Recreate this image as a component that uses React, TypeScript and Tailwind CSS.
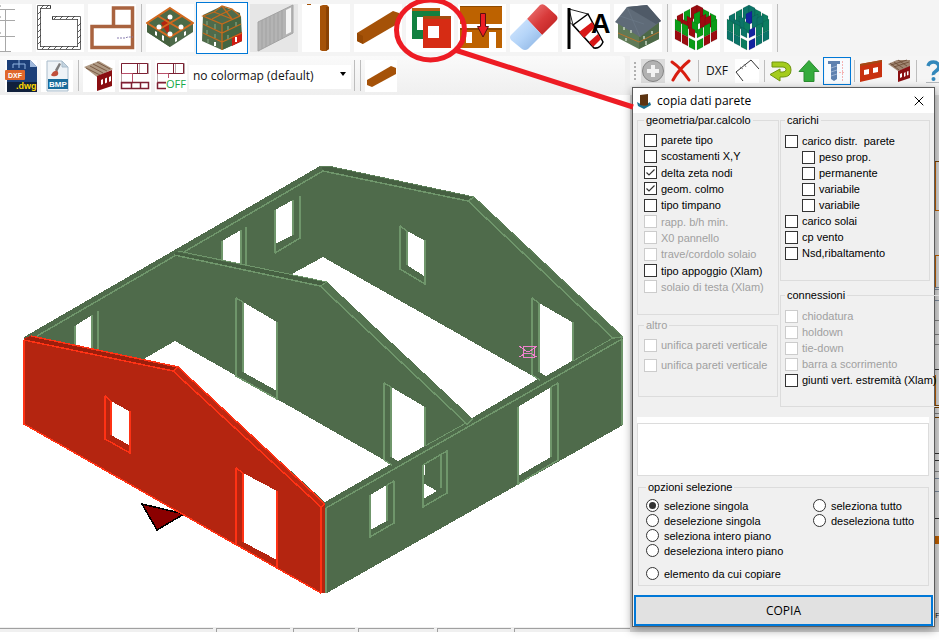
import { useState, type ReactNode } from 'react'
import clsx from 'clsx'
import { X } from 'lucide-react'

type Option = {
  id: string
  label: string
  disabled?: boolean
  indent?: boolean
}

const GEOMETRIA: Option[] = [
  { id: 'parete-tipo', label: 'parete tipo' },
  { id: 'scostamenti', label: 'scostamenti X,Y' },
  { id: 'delta-zeta', label: 'delta zeta nodi' },
  { id: 'geom-colmo', label: 'geom. colmo' },
  { id: 'tipo-timpano', label: 'tipo timpano' },
  { id: 'rapp-bh', label: 'rapp. b/h min.', disabled: true },
  { id: 'x0', label: 'X0 pannello', disabled: true },
  { id: 'trave', label: 'trave/cordolo solaio', disabled: true },
  { id: 'appoggio', label: 'tipo appoggio (Xlam)' },
  { id: 'solaio-testa', label: 'solaio di testa (Xlam)', disabled: true },
]

const ALTRO: Option[] = [
  { id: 'unifica-1', label: 'unifica pareti verticale', disabled: true },
  { id: 'unifica-2', label: 'unifica pareti verticale', disabled: true },
]

const CARICHI: Option[] = [
  { id: 'distr', label: 'carico distr.  parete' },
  { id: 'peso', label: 'peso prop.', indent: true },
  { id: 'permanente', label: 'permanente', indent: true },
  { id: 'variabile-1', label: 'variabile', indent: true },
  { id: 'variabile-2', label: 'variabile', indent: true },
  { id: 'solai', label: 'carico solai' },
  { id: 'vento', label: 'cp vento' },
  { id: 'nsd', label: 'Nsd,ribaltamento' },
]

const CONNESSIONI: Option[] = [
  { id: 'chiodatura', label: 'chiodatura', disabled: true },
  { id: 'holdown', label: 'holdown', disabled: true },
  { id: 'tie-down', label: 'tie-down', disabled: true },
  { id: 'barra', label: 'barra a scorrimento', disabled: true },
  { id: 'giunti', label: 'giunti vert. estremità (Xlam)' },
]

const SELEZIONE = ['selezione singola', 'deselezione singola', 'seleziona intero piano', 'deseleziona intero piano']
const SELEZIONE_TUTTO = ['seleziona tutto', 'deseleziona tutto']

/* ---------- large toolbar icons, 48x48 ---------- */

function Icon48({ children }: { children: ReactNode }) {
  return (
    <svg viewBox="0 0 48 48" className="h-12 w-12 shrink-0" aria-hidden>
      {children}
    </svg>
  )
}

function GridIcon() {
  return (
    <Icon48>
      <path d="M15 5.5H31M15 16.5H31M15 32.5H31M21.5 5V47M16 47.5H27" stroke="#a8a8a8" fill="none" />
      <path d="M15 2H17M15 13H17M15 29H17" stroke="#888" fill="none" />
    </Icon48>
  )
}

function WallPlanIcon() {
  return (
    <Icon48>
      <path d="M15 3H3V44H43V14H16" fill="none" stroke="#333" strokeWidth="3.500" />
      <path d="M14 3H3V44H43V14H17" fill="none" stroke="#fff" strokeWidth="2" />
      <path
        d="M5 4l3-3M10 4l3-3M2 10l3-3M2 16l3-3M2 22l3-3M2 28l3-3M2 34l3-3M2 40l3-3M6 45l3-3M12 45l3-3M18 45l3-3M24 45l3-3M30 45l3-3M36 45l3-3M42 40l3-3M42 34l3-3M42 28l3-3M42 22l3-3M36 15l3-3M30 15l3-3M24 15l3-3M18 15l3-3"
        stroke="#333"
        strokeWidth=".8"
      />
    </Icon48>
  )
}

function FloorPlanIcon() {
  return (
    <Icon48>
      <path d="M4 22.500H44.500V43.500H4ZM25.500 22V4H44.500V22" fill="none" stroke="#a9633f" strokeWidth="3.500" />
      <path d="M29 34h8l3-1h5" fill="none" stroke="#8a7fb0" strokeDasharray="2 1" />
    </Icon48>
  )
}

function OpenFloorIcon() {
  return (
    <Icon48>
      <path d="M24 4L47 19V28L24 43L1 28V19Z" fill="#4f6b4b" />
      <path d="M24 33V43L1 28V19Z" fill="#45613f" />
      <path d="M24 4L47 19L24 33L1 19Z" fill="#4c6a47" />
      <path d="M15 19L23 14V27L21 29Z" fill="#b42510" />
      <path d="M24 4L47 19L24 33L1 19ZM12 12L36 26M36 12L12 26" fill="none" stroke="#d2691e" strokeWidth="2" />
      <circle cx="24" cy="13" r="2.500" fill="#fff" />
      <circle cx="13" cy="23" r="2.500" fill="#fff" />
      <circle cx="35" cy="23" r="2.500" fill="#fff" />
      <circle cx="24" cy="30" r="2.500" fill="#fff" />
      <path d="M9 27l2 1v4l-2-1zM16 31l2 1v5l-2-1zM29 34l2-1v4l-2 1zM38 28l2-1v4l-2 1z" fill="#fff" />
    </Icon48>
  )
}

function BuildingIcon() {
  return (
    <Icon48>
      <path d="M5 11L24 2L42 9L44 37L24 46L4 37Z" fill="#4f6b4b" />
      <path d="M24 20L43 12L44 37L24 46Z" fill="#456541" />
      <path d="M34 33L44 28V37L34 42Z" fill="#d01c12" />
      <path
        d="M5 12L16 8L24 2L34 5L42 12L24 20ZM16 8L34 15M24 2L34 15M14 15L34 5M5 20L24 29L43 20M5 29L24 38L44 29M24 20V46"
        fill="none"
        stroke="#c46a1c"
        strokeWidth="1.300"
      />
      <path d="M9 17v4M17 20v5M9 26v4M17 30v4M30 22v4M38 18v4M30 31v4M10 35v4" stroke="#6c8b68" strokeWidth="2" />
      <path d="M17 38v4M38 33v5" stroke="#fff" strokeWidth="2" />
    </Icon48>
  )
}

function PanelIcon() {
  return (
    <Icon48>
      <rect width="48" height="48" fill="#e6e6e6" />
      <path d="M8 18L43 1V29L8 47Z" fill="#b4b4b4" stroke="#a4a4a4" />
      <path d="M12 16V45M16 14V43M20 12V41M24 10V39M28 8V37M32 6V35" stroke="#a2a2a2" />
      <path d="M36 6L41 3.500V28L36 30.500Z" fill="#f4f4f4" />
    </Icon48>
  )
}

function PostIcon() {
  return (
    <Icon48>
      <path d="M18 2l3-1h4l2 2v42l-3 2h-4l-2-1z" fill="#a55208" />
      <path d="M24 3h3v42l-3 2z" fill="#8a4204" />
      <path d="M5 0h4v1H5z" fill="#a55208" />
    </Icon48>
  )
}

function BeamIcon() {
  return (
    <Icon48>
      <path d="M3 29L39 7L45 9V19L9 40L3 37Z" fill="#a55208" />
      <path d="M3 29L9 32V40L3 37Z" fill="#964803" />
    </Icon48>
  )
}

function CopyWallIcon() {
  return (
    <Icon48>
      <path d="M6 5H34V35H6ZM11 13V26H17V13Z" fill="#138040" fillRule="evenodd" />
      <path d="M6 4h28v3H6z" fill="#b75c12" />
      <path d="M17 12H45V44H17ZM22 22V34H33V22Z" fill="#d62c14" fillRule="evenodd" />
      <path d="M22 22h11v12H22z" fill="#fff" />
      <path d="M17 12h28v3H17z" fill="#a54c10" />
    </Icon48>
  )
}

function SplitWallIcon() {
  return (
    <Icon48>
      <path d="M2 2H44V20H2ZM2 25H44V44H2ZM8 28V39H14V28ZM31 28V44H38V28Z" fill="#bd6200" fillRule="evenodd" />
      <path d="M2 24h42v2H2zM2 2h42v1H2z" fill="#8f4a00" />
      <path d="M22.500 9.500h5v13h3L25 33l-5.500-10.500h3z" fill="#ed1c24" stroke="#5c1010" />
    </Icon48>
  )
}

function EraserIcon() {
  return (
    <Icon48>
      <defs>
        <linearGradient id="rubberRed" x1="0" y1="0" x2="1" y2="1">
          <stop offset="0" stopColor="#f08080" />
          <stop offset=".5" stopColor="#d83a3a" />
          <stop offset="1" stopColor="#b81c1c" />
        </linearGradient>
        <linearGradient id="rubberBlue" x1="0" y1="0" x2="1" y2="1">
          <stop offset="0" stopColor="#d8eaff" />
          <stop offset=".5" stopColor="#b4d4f8" />
          <stop offset="1" stopColor="#88b0e0" />
        </linearGradient>
      </defs>
      <path d="M17 15L30 1Q33 -1 36 2L46 11Q49 14 46 17L32 31Z" fill="url(#rubberRed)" />
      <path d="M17 15L32 31L18 45Q15 47 12 45L1 36Q-1 33 1 31Z" fill="url(#rubberBlue)" />
    </Icon48>
  )
}

function WindsockIcon() {
  return (
    <Icon48>
      <path d="M11 21L26 10L41 38Q38 45 32 44Z" fill="#fff" stroke="#000" strokeWidth="1.500" />
      <path d="M17 28L30 18L33 23L22 34ZM27 38L36 30L39 35L31 43Z" fill="#d81818" />
      <path d="M7 5L26 10M7 5L11 21M7 18L11 21" stroke="#222" fill="none" />
      <path d="M7 4V45" stroke="#000" strokeWidth="3" />
      <text x="29" y="29" fontSize="27" fontWeight="700" fontFamily="Liberation Sans, sans-serif">
        A
      </text>
    </Icon48>
  )
}

function HouseIcon() {
  return (
    <Icon48>
      <path d="M4 19L26 28L45 18V35L25 45L4 34Z" fill="#5f7a57" />
      <path d="M25 30L45 18V35L25 45Z" fill="#4d6947" />
      <path d="M1 18L13 3L33 1L47 17L26 33Z" fill="#5f6b78" />
      <path d="M13 3L33 1L47 17L42 20Z" fill="#4f5a67" />
      <path d="M13 3L26 33M6 12L30 20" stroke="#6c7886" strokeWidth=".7" fill="none" />
      <path d="M4 29L25 38L45 28" stroke="#b8722c" fill="none" />
      <path d="M10 23v3M17 26v3M30 32v3M38 27v3M12 34v3M32 37v4" stroke="#c4d4c0" strokeWidth="1.500" />
    </Icon48>
  )
}

type Block = [x: number, y: number, slope: 3 | -3, h: number, tone: 0 | 1 | 2]

// back to front, so the front walls cover the inner ones
const BLOCKS: Block[] = [
  [19, 4, -3, 12, 0],
  [25, 1, 3, 12, 0],
  [12, 8, -3, 12, 1],
  [31, 5, 3, 12, 1],
  [5, 12, -3, 10, 0],
  [38, 9, 3, 12, 1],
  [15, 12, 3, 12, 0],
  [22, 10, -3, 12, 2],
  [28, 13, -3, 12, 0],
  [20, 17, 3, 10, 1],
  [10, 15, 3, 8, 0],
  [33, 14, -3, 12, 0],
  [3, 15, 3, 11, 1],
  [10, 19, 3, 11, 1],
  [17, 23, 3, 8, 0],
  [25, 26, -3, 8, 2],
  [32, 22, -3, 11, 1],
  [39, 18, -3, 11, 1],
  [3, 26, 3, 9, 0],
  [10, 30, 3, 9, 0],
  [17, 34, 3, 9, 1],
  [25, 37, -3, 9, 2],
  [32, 33, -3, 9, 0],
  [39, 29, -3, 9, 0],
]

function BlocksIcon({ tones }: { tones: [string, string, string] }) {
  return (
    <Icon48>
      {BLOCKS.map(([x, y, slope, h, tone], i) => (
        <path
          key={i}
          d={`M${x} ${y}l6 ${slope}v${h}l-6 ${-slope}z`}
          fill={tones[tone]}
          stroke="rgba(0,0,0,.2)"
          strokeWidth=".5"
        />
      ))}
    </Icon48>
  )
}

/* ---------- small toolbar icons, 32x32 and 24x24 ---------- */

function Icon32({ children }: { children: ReactNode }) {
  return (
    <svg viewBox="0 0 32 32" className="h-8 w-8 shrink-0 bg-white" aria-hidden>
      {children}
    </svg>
  )
}

function DxfIcon() {
  return (
    <Icon32>
      <path d="M2 0H25L32 7V32H2Z" fill="#1c3f78" />
      <path d="M2 22H32V32H2Z" fill="#10203c" />
      <path d="M25 0L32 7H25Z" fill="#9fb8dc" />
      <path d="M8 8V4h12v5M14 0v8" stroke="#8fb4e0" fill="none" />
      <rect x="0" y="10" width="20" height="10" rx="1" fill="#e0672c" />
      <text x="3" y="18" fontSize="7" fontWeight="700" fill="#fff" fontFamily="Liberation Sans, sans-serif">
        DXF
      </text>
      <text x="11" y="29" fontSize="9" fontWeight="700" fill="#ffd800" fontFamily="Liberation Sans, sans-serif">
        .dwg
      </text>
    </Icon32>
  )
}

function BmpIcon() {
  return (
    <Icon32>
      <path d="M6 1H21L27 7V31H6Z" fill="#eef3f7" stroke="#a9bccb" />
      <path d="M21 1V7H27Z" fill="#c4d4e0" stroke="#a9bccb" />
      <path d="M18 3l-4 7 2 2 4-8z" fill="#7d7d7d" />
      <path d="M12 12q4-3 5 0t-2 4q-4 1-5-1z" fill="#c0503c" />
      <rect x="7" y="19" width="20" height="10" fill="#1a6c9c" />
      <text x="8" y="27" fontSize="8" fontWeight="700" fill="#fff" fontFamily="Liberation Sans, sans-serif">
        BMP
      </text>
    </Icon32>
  )
}

function RoofWallIcon() {
  return (
    <Icon32>
      <path d="M1 7L16 1L30 9L14 17Z" fill="#b09a84" />
      <path d="M3 8L17 15M7 6L20 13M10 4L24 11M14 2L27 9" stroke="#7a5a44" />
      <path d="M14 16L29 10V26L14 31Z" fill="#8a0f12" />
      <path d="M18 20l2-1v5l-2 1zM22 18.500l2-1v5l-2 1zM26 17l2-1v5l-2 1z" fill="#fff" />
    </Icon32>
  )
}

function LayoutIcon({ off }: { off?: boolean }) {
  return (
    <Icon32>
      <path d="M2.500 3.500H29.500V14M20.500 3V14M2.500 3.500V29" fill="none" stroke="#b7a5a7" />
      <path d="M2.500 3.500H28.500V13.500H2.500ZM18.500 3.500V13.500" fill="none" stroke="#7d2033" />
      <path d="M2.500 13.500H13.500V23H2.500" fill="none" stroke="#b8506a" />
      {off ? (
        <>
          <path d="M2.500 22.500H11M2.500 22.500V28.500H11" fill="none" stroke="#7d2033" strokeWidth="1.500" />
          <path d="M11 18h21v11H11z" fill="#fff" />
          <text x="11" y="28" fontSize="11" fill="#14a848" fontFamily="Open Sans, sans-serif">
            OFF
          </text>
        </>
      ) : (
        <path d="M2.500 22.500H29.500V28.500H2.500ZM12.500 22V28M21.500 22V28" fill="none" stroke="#7d2033" strokeWidth="1.500" />
      )}
    </Icon32>
  )
}

function SmallBeamIcon() {
  return (
    <Icon32>
      <path d="M2 20L26 6L31 8V14L7 27L2 25Z" fill="#a55208" />
    </Icon32>
  )
}

function Icon24({ children }: { children: ReactNode }) {
  return (
    <svg viewBox="0 0 24 24" className="h-6 w-6 shrink-0" aria-hidden>
      {children}
    </svg>
  )
}

function AddIcon() {
  return (
    <Icon24>
      <rect width="24" height="24" fill="#dcdcdc" />
      <circle cx="12" cy="12" r="10.500" fill="#b2b2b2" stroke="#858585" />
      <path d="M10 6h4v4h4v4h-4v4h-4v-4H6v-4h4z" fill="#f2f2f2" />
    </Icon24>
  )
}

function DeleteIcon() {
  return (
    <Icon24>
      <path d="M3 3Q12 9 20 21M20 2Q10 10 4 21" fill="none" stroke="#d81e10" strokeWidth="3" strokeLinecap="round" />
    </Icon24>
  )
}

function PolylineIcon() {
  return (
    <Icon24>
      <rect width="24" height="24" fill="#fff" />
      <path d="M8 22L1 13L16 1L24 10" fill="none" stroke="#333" />
      <path d="M5 8l3 2M9 5l2 3" stroke="#888" />
    </Icon24>
  )
}

function UndoIcon() {
  return (
    <Icon24>
      <path
        d="M3 3H14Q22 4 22 11T14 18H11V22L1 15.500L11 10V13H14Q17 13 17 10.500T14 8H3Z"
        fill="#a4cc1c"
        stroke="#6f9410"
      />
    </Icon24>
  )
}

function UpIcon() {
  return (
    <Icon24>
      <path d="M12 1.500L22 12.500H17V22.500H7V12.500H2Z" fill="#35ab3c" stroke="#2b8c31" />
    </Icon24>
  )
}

function ScrewIcon() {
  return (
    <Icon24>
      <rect width="24" height="24" fill="#f7fbff" />
      <path d="M3 2h12v3h-3v15l-3 2-3-2V5H3z" fill="#5f82b0" />
      <path d="M6 9l6-2M6 13l6-2M6 17l6-2" stroke="#a9bdd8" strokeWidth=".8" />
      <path d="M17.500 2V22M14 13.500h6" stroke="#f4b4b4" strokeDasharray="2 1" />
    </Icon24>
  )
}

function WallIcon() {
  return (
    <Icon24>
      <path d="M1 5L23 1V18L1 23Z" fill="#c8310f" />
      <path d="M1 5L23 1V3L1 7Z" fill="#a14a14" />
      <path d="M5 11l5-1v5l-5 1zM14 9l5-1v5l-5 1z" fill="#fff" />
    </Icon24>
  )
}

function RoofIcon() {
  return (
    <Icon24>
      <path d="M1 5L10 1H23V8L11 12Z" fill="#a08672" />
      <path d="M4 6l16-5M7 8l15-5M3 4l9 7M7 3l9 6M11 1l9 6" stroke="#6b4a34" strokeWidth=".8" />
      <path d="M11 12L23 7V19L11 23Z" fill="#8a0f12" />
      <path d="M13 15l2-1v4l-2 1zM17 14l1.500-1v4L17 18zM20 12.500l1.500-.5v4l-1.500.5z" fill="#fff" />
    </Icon24>
  )
}

function HelpIcon() {
  return (
    <Icon24>
      <path d="M7 7Q8 3 12.500 3T18 7.500Q18 10 15 12T12.500 16" fill="none" stroke="#3388bb" strokeWidth="3.500" />
      <circle cx="12.500" cy="20" r="2" fill="#3388bb" />
      <path d="M5 23.500H20" stroke="#b4b8bc" />
    </Icon24>
  )
}

/* ---------- toolbars ---------- */

function Separator() {
  return (
    <span className="flex w-[6px] shrink-0 justify-center self-stretch py-1" aria-hidden>
      <span className="w-px bg-[#bdbdbd]" />
    </span>
  )
}

function BigButton({ title, active, plain, children }: { title: string; active?: boolean; plain?: boolean; children: ReactNode }) {
  return (
    <button
      type="button"
      aria-label={title}
      className={clsx(
        'flex h-[52px] w-[52px] shrink-0 items-center justify-center border',
        active ? 'border-[#0078d7] bg-white' : 'border-transparent',
      )}
    >
      <span className={clsx('block', !plain && 'bg-white')}>{children}</span>
    </button>
  )
}

function MediumButton({ title, children }: { title: string; children: ReactNode }) {
  return (
    <button type="button" aria-label={title} className="flex h-9 w-9 shrink-0 items-center justify-center">
      {children}
    </button>
  )
}

function SmallButton({ title, active, children }: { title: string; active?: boolean; children: ReactNode }) {
  return (
    <button
      type="button"
      aria-label={title}
      className={clsx(
        'flex h-7 w-7 shrink-0 items-center justify-center border',
        active ? 'border-[#0078d7]' : 'border-transparent',
      )}
    >
      {children}
    </button>
  )
}

function MainToolbar() {
  return (
    <div className="flex h-14 items-center overflow-hidden bg-[#f4f4f4]">
      <button type="button" aria-label="griglia" className="flex h-[52px] w-[34px] shrink-0 items-center justify-end overflow-hidden pr-[2px]">
        <span className="bg-white">
          <GridIcon />
        </span>
      </button>
      <BigButton title="muri"><WallPlanIcon /></BigButton>
      <BigButton title="pianta"><FloorPlanIcon /></BigButton>
      <Separator />
      <BigButton title="piano 3D"><OpenFloorIcon /></BigButton>
      <BigButton title="edificio 3D" active><BuildingIcon /></BigButton>
      <BigButton title="pannello" plain><PanelIcon /></BigButton>
      <BigButton title="pilastro"><PostIcon /></BigButton>
      <BigButton title="trave"><BeamIcon /></BigButton>
      <BigButton title="copia dati parete"><CopyWallIcon /></BigButton>
      <BigButton title="dividi parete"><SplitWallIcon /></BigButton>
      <BigButton title="cancella"><EraserIcon /></BigButton>
      <BigButton title="vento"><WindsockIcon /></BigButton>
      <BigButton title="casa"><HouseIcon /></BigButton>
      <Separator />
      <BigButton title="verifiche"><BlocksIcon tones={['#9c0c10', '#0c9c18', '#0c9c18']} /></BigButton>
      <BigButton title="colormap"><BlocksIcon tones={['#0c7468', '#0c7c60', '#1424a0']} /></BigButton>
      <Separator />
    </div>
  )
}

function ViewToolbar() {
  return (
    <div className="flex min-w-0 flex-1 items-center overflow-hidden rounded-r-sm bg-gradient-to-b from-[#fafafa] to-[#efefef] pl-[3px]">
      <MediumButton title="esporta DXF"><DxfIcon /></MediumButton>
      <MediumButton title="esporta BMP"><BmpIcon /></MediumButton>
      <Separator />
      <MediumButton title="tetto"><RoofWallIcon /></MediumButton>
      <MediumButton title="layout"><LayoutIcon /></MediumButton>
      <MediumButton title="layout off"><LayoutIcon off /></MediumButton>
      <div className="relative w-[162px] shrink-0">
        <select
          aria-label="colormap"
          className="h-6 w-full appearance-none bg-white pb-[2px] pl-1 font-['Open_Sans',sans-serif] text-[12px] text-[#111]"
        >
          <option>no colormap (default)</option>
        </select>
        <svg viewBox="0 0 6 4" className="pointer-events-none absolute top-[10px] right-[5px] h-1 w-[6px]" aria-hidden>
          <path d="M0 0H6L3 4Z" fill="#000" />
        </svg>
      </div>
      <Separator />
      <Separator />
      <MediumButton title="trave"><SmallBeamIcon /></MediumButton>
    </div>
  )
}

function EditToolbar() {
  return (
    <div className="flex h-[30px] w-[309px] shrink-0 items-center overflow-hidden bg-[#f5f5f5]">
      <span className="flex w-[9px] shrink-0 flex-col items-center gap-[2px]" aria-hidden>
        {[0, 1, 2, 3, 4].map((dot) => (
          <span key={dot} className="h-[2px] w-[2px] bg-[#b0b0b0]" />
        ))}
      </span>
      <SmallButton title="aggiungi"><AddIcon /></SmallButton>
      <SmallButton title="elimina"><DeleteIcon /></SmallButton>
      <Separator />
      <button type="button" className="w-8 shrink-0 text-center font-['Open_Sans',sans-serif] text-[12px] text-[#111]">
        DXF
      </button>
      <SmallButton title="polilinea"><PolylineIcon /></SmallButton>
      <Separator />
      <SmallButton title="annulla"><UndoIcon /></SmallButton>
      <SmallButton title="su"><UpIcon /></SmallButton>
      <SmallButton title="connettori" active><ScrewIcon /></SmallButton>
      <Separator />
      <SmallButton title="parete"><WallIcon /></SmallButton>
      <SmallButton title="copertura"><RoofIcon /></SmallButton>
      <Separator />
      <SmallButton title="guida"><HelpIcon /></SmallButton>
    </div>
  )
}

/* ---------- 3D model ---------- */

function Model() {
  return (
    <svg
      viewBox="0 95 625 532"
      className="h-[532px] w-[625px] shrink-0"
      shapeRendering="crispEdges"
      role="img"
      aria-label="modello 3D"
    >
      {/* back walls */}
      <path d="M24 337L320 166H328L474 197L623 337V425L327 593H322L24 424Z" fill="#4f6b4b" />
      <path d="M322 166L328 166L474 197L468 201L323 171Z" fill="#466042" />
      <path d="M474 197L623 337L613 338L468 201Z" fill="#547350" />
      <path d="M320 166H328L474 197L623 337" fill="none" stroke="#5d7f59" />
      <path d="M37 336L178 254M184 252L323 171L468 201L613 338L623 337M474 197L468 201" fill="none" stroke="#6f966b" strokeWidth="1.500" />

      {/* floor seen between the walls */}
      <path d="M323 257L538 379L472 418L326 282L290 275Z" fill="#fff" />
      <path d="M175 341L391 464L325 502L178 368L142 360Z" fill="#fff" />

      {/* openings of the left and back walls */}
      <path
        d="M275 210L293 200V235L275 244ZM222 241L241 230V264L222 260ZM75 326L92 315V349L75 345ZM407 231L424 240V276L407 265ZM539 303L572 322V361L546 376L539 372Z"
        fill="#fff"
      />
      <path
        d="M300 196V238L275 253M275 210V253M293 200V235M246 227V265M241 230V264M222 241V260M98 311V350M92 315V349M75 326V345M400 226V269L425 284V240M407 231V265M400 226L407 231M532 298V375M539 303V372M573 322V361M532 298L539 303M532 375L540 380"
        fill="none"
        stroke="#6f966b"
        strokeWidth="1.500"
      />

      {/* middle wall */}
      <path d="M175 252L327 282L320 286L175 256Z" fill="#466042" />
      <path d="M327 282L473 419L467 424L320 286Z" fill="#547350" />
      <path d="M178 251L327 282L320 286" fill="none" stroke="#6f966b" />
      <path d="M174 255L320 286L467 424L473 419" fill="none" stroke="#6f966b" strokeWidth="1.500" />
      <path d="M243 302L277 322V391L243 372ZM391 387L425 407V446L398 461L391 457Z" fill="#fff" />
      <path
        d="M236 298V376L277 399V322M243 302V372M236 298L243 302M384 383V460M391 387V457M384 383L391 387M425 407V446M384 460L392 465"
        fill="none"
        stroke="#6f966b"
        strokeWidth="1.500"
      />

      {/* right wall */}
      <path d="M326 508L622 339M326 508V593M622 339V425" fill="none" stroke="#6f966b" strokeWidth="1.500" />
      <path d="M613 338L573 361M466 423L425 446" fill="none" stroke="#6f966b" />
      <path d="M518 407L551 387V457L518 476ZM370 495L387 485V521L370 530ZM423 483L437 491L423 499ZM423 465L425 464V475H423Z" fill="#fff" />
      <path
        d="M551 387V457M558 383V460L518 484V407M551 387L558 383M387 485V521M394 481V523L370 537V495M387 485L394 481M423 465L447 451V493L423 507V465M441 454V488"
        fill="none"
        stroke="#6f966b"
        strokeWidth="1.500"
      />

      <path d="M142 504L184 514L157 530Z" fill="#8b0000" stroke="#000" strokeWidth="1.500" />

      {/* selected wall */}
      <path d="M24 338L31 336L178 367L325 504V593H320L24 424Z" fill="#b42510" />
      <path d="M111 401V435L129 445V411ZM243 473V542L277 560V491Z" fill="#fff" />
      <path d="M31 336L178 367L173 371L24 340Z" fill="#9c1e0c" />
      <path d="M178 367L325 504L321 508L173 371Z" fill="#be2812" />
      <path
        d="M24 340V424L321 593M24 340L173 371L321 507V593M31 336L178 367L325 504M173 371L178 367M325 504L321 507M105 396V439L130 453V411M111 401V435M105 396L111 401M236 468V545M243 473V542M277 491V567M236 468L243 473"
        fill="none"
        stroke="#ff3214"
        strokeWidth="1.500"
      />

      {/* snap marker */}
      <path d="M523 346H534V357H523ZM519 346L526 351H530L537 346M519 357L526 353H530L537 357" fill="none" stroke="#ee82cc" />
    </svg>
  )
}

/* plan pane, mostly hidden behind the dialog */
function PlanPane() {
  return (
    <div className="flex w-[309px] shrink-0 justify-end overflow-hidden bg-[#d9d9d9]">
      <svg viewBox="0 95 8 537" className="h-[537px] w-2 shrink-0" shapeRendering="crispEdges" aria-hidden>
        <path d="M0 161.500H8M0 405.500H8M0 407.500H8M0 417.500H8" stroke="#7a4200" />
        <path d="M4.500 162V210M0 210.500H8M0 255.500H8M4.500 256V287M4.500 375V405" stroke="#c06000" fill="none" />
        <path d="M0 287.500H8M0 289.500H8M0 300.500H8M0 478.500H8M0 491.500H8" stroke="#7c8a9c" />
        <path d="M0 320.500H8M0 334.500H8M0 344.500H8M0 413.500H8M0 471.500H8M0 542.500H8" stroke="#808080" />
        <path d="M0 369.500H8M0 453.500H8M0 460.500H8M0 518.500H8" stroke="#333" />
        <path d="M0 536H8V544H0Z" fill="#c06000" />
        <text x="4" y="618" fontSize="8" fontFamily="Open Sans, sans-serif">F</text>
      </svg>
    </div>
  )
}

function StatusBar() {
  return (
    <div className="flex h-[5px] gap-[3px] bg-[#f0f0f0] pt-px">
      <span className="w-[213px] border-t border-[#a0a0a0]" />
      <span className="w-[74px] border-t border-l border-[#a0a0a0]" />
      <span className="w-[62px] border-t border-l border-[#a0a0a0]" />
      <span className="w-[76px] border-t border-l border-[#a0a0a0]" />
      <span className="w-[74px] border-t border-l border-[#a0a0a0]" />
      <span className="flex-1 border-t border-l border-[#a0a0a0]" />
    </div>
  )
}

/* ---------- dialog ---------- */

function Group({ title, disabled, className, children }: { title: string; disabled?: boolean; className?: string; children: ReactNode }) {
  return (
    <fieldset className={clsx('border border-[#dcdcdc]', className)}>
      <legend className={clsx('px-[2px] leading-[14px]', disabled ? 'text-[#a0a0a0]' : 'text-black')}>{title}</legend>
      {children}
    </fieldset>
  )
}

function CheckRow({ option, checked, onToggle }: { option: Option; checked: boolean; onToggle: (id: string) => void }) {
  return (
    <label
      className={clsx(
        'flex h-4 items-center gap-1 whitespace-pre',
        option.indent && 'pl-[17px]',
        option.disabled ? 'text-[#a0a0a0]' : 'text-black',
      )}
    >
      <span className="relative block h-[13px] w-[13px] shrink-0">
        <input
          type="checkbox"
          checked={checked}
          disabled={option.disabled}
          onChange={() => onToggle(option.id)}
          className="peer block h-[13px] w-[13px] appearance-none border border-[#333] bg-white disabled:border-[#cccccc]"
        />
        <svg viewBox="0 0 13 13" className="pointer-events-none absolute inset-0 hidden peer-checked:block" aria-hidden>
          <path d="M2.500 6.500L5 9L10.500 3.500" fill="none" stroke="#333" strokeWidth="1.200" />
        </svg>
      </span>
      {option.label}
    </label>
  )
}

function RadioRow({ label, value, onSelect }: { label: string; value: string; onSelect: (label: string) => void }) {
  return (
    <label className="flex h-[15px] items-center gap-[5px] whitespace-nowrap">
      <input
        type="radio"
        name="selezione"
        checked={value === label}
        onChange={() => onSelect(label)}
        className="grid h-[13px] w-[13px] shrink-0 appearance-none place-items-center rounded-full border border-[#333] bg-white checked:before:h-[7px] checked:before:w-[7px] checked:before:rounded-full checked:before:bg-[#333]"
      />
      {label}
    </label>
  )
}

function CopyDialog() {
  const [checked, setChecked] = useState<string[]>(['delta-zeta', 'geom-colmo'])
  const [mode, setMode] = useState('selezione singola')

  const toggle = (id: string) => {
    setChecked((prev) => (prev.includes(id) ? prev.filter((c) => c !== id) : [...prev, id]))
  }

  const renderRows = (options: Option[]) =>
    options.map((option) => (
      <CheckRow key={option.id} option={option} checked={checked.includes(option.id)} onToggle={toggle} />
    ))

  return (
    <div
      role="dialog"
      aria-label="copia dati parete"
      className="absolute top-[87px] right-1 w-[303px] border border-[#5c5c5c] bg-[#f0f0f0] font-['Liberation_Sans',sans-serif] text-[11px] leading-[14px] text-black shadow-[0_3px_9px_rgba(0,0,0,0.4)]"
    >
      <div className="flex h-[25px] items-center bg-white pr-[7px] pl-1">
        <svg viewBox="0 0 14 16" className="h-4 w-[14px]" aria-hidden>
          <path d="M0 9L7 13L13 9L14 12L7 16L1 13Z" fill="#1a7090" />
          <path d="M3 2L11 1V12L7 13L3 12Z" fill="#5c3412" />
        </svg>
        <h1 className="ml-[6px] flex-1 font-['Open_Sans',sans-serif] text-[12px]">copia dati parete</h1>
        <button type="button" aria-label="chiudi">
          <X className="h-4 w-4" strokeWidth={1.500} />
        </button>
      </div>

      <div className="flex gap-px pl-1">
        <div className="flex w-[142px] flex-col gap-[3px]">
          <Group title="geometria/par.calcolo" className="h-[202px] px-[6px] pt-[5px]">
            <div className="flex h-[163px] flex-col justify-between">{renderRows(GEOMETRIA)}</div>
          </Group>
          <Group title="altro" disabled className="mx-px h-[79px] px-[5px] pt-[5px]">
            <div className="flex flex-col gap-1">{renderRows(ALTRO)}</div>
          </Group>
        </div>
        <div className="flex min-w-0 flex-1 flex-col gap-[7px]">
          <Group title="carichi" className="mr-1 h-[168px] px-1 pt-[6px]">
            {renderRows(CARICHI)}
          </Group>
          <Group title="connessioni" className="h-[119px] border-r-0 px-1 pt-[6px]">
            {renderRows(CONNESSIONI)}
          </Group>
        </div>
      </div>

      <div className="mt-[10px] mr-[5px] ml-1 bg-white pt-[6px]">
        <textarea aria-label="messaggi" readOnly className="block h-[53px] w-full resize-none border border-[#dcdcdc] bg-white" />
      </div>

      <Group title="opzioni selezione" className="mx-[5px] mt-1 h-[106px] px-[7px] pt-1">
        <div className="grid grid-cols-[167px_1fr]">
          <div>
            {SELEZIONE.map((label) => (
              <RadioRow key={label} label={label} value={mode} onSelect={setMode} />
            ))}
          </div>
          <div>
            {SELEZIONE_TUTTO.map((label) => (
              <RadioRow key={label} label={label} value={mode} onSelect={setMode} />
            ))}
          </div>
        </div>
        <div className="mt-2">
          <RadioRow label="elemento da cui copiare" value={mode} onSelect={setMode} />
        </div>
      </Group>

      <div className="px-px pt-[9px]">
        <button type="button" className="h-[31px] w-full border-2 border-[#0078d7] bg-[#e1e1e1] font-['Open_Sans',sans-serif] text-[12px]">
          COPIA
        </button>
      </div>
    </div>
  )
}

/* red pencil mark from the toolbar button to the dialog */
function Callout() {
  return (
    <svg viewBox="0 0 640 112" className="pointer-events-none absolute top-0 left-0 h-[112px] w-[640px]" aria-hidden>
      <ellipse cx="430.500" cy="30" rx="34" ry="30" fill="none" stroke="#ed1c24" strokeWidth="5" />
      <path d="M455 50L633 107" stroke="#ed1c24" strokeWidth="5" />
    </svg>
  )
}

export default function App() {
  return (
    <div className="relative flex min-h-screen flex-col overflow-hidden bg-white pb-2">
      <MainToolbar />
      <div className="flex h-[39px] items-start gap-[5px] bg-[#f0f0f0]">
        <div className="flex min-w-0 flex-1 self-stretch">
          <ViewToolbar />
        </div>
        <EditToolbar />
      </div>
      <div className="flex flex-1">
        <div className="flex min-w-0 flex-1 flex-col overflow-hidden">
          <div className="flex-1">
            <Model />
          </div>
          <StatusBar />
        </div>
        <PlanPane />
      </div>
      <CopyDialog />
      <Callout />
    </div>
  )
}
